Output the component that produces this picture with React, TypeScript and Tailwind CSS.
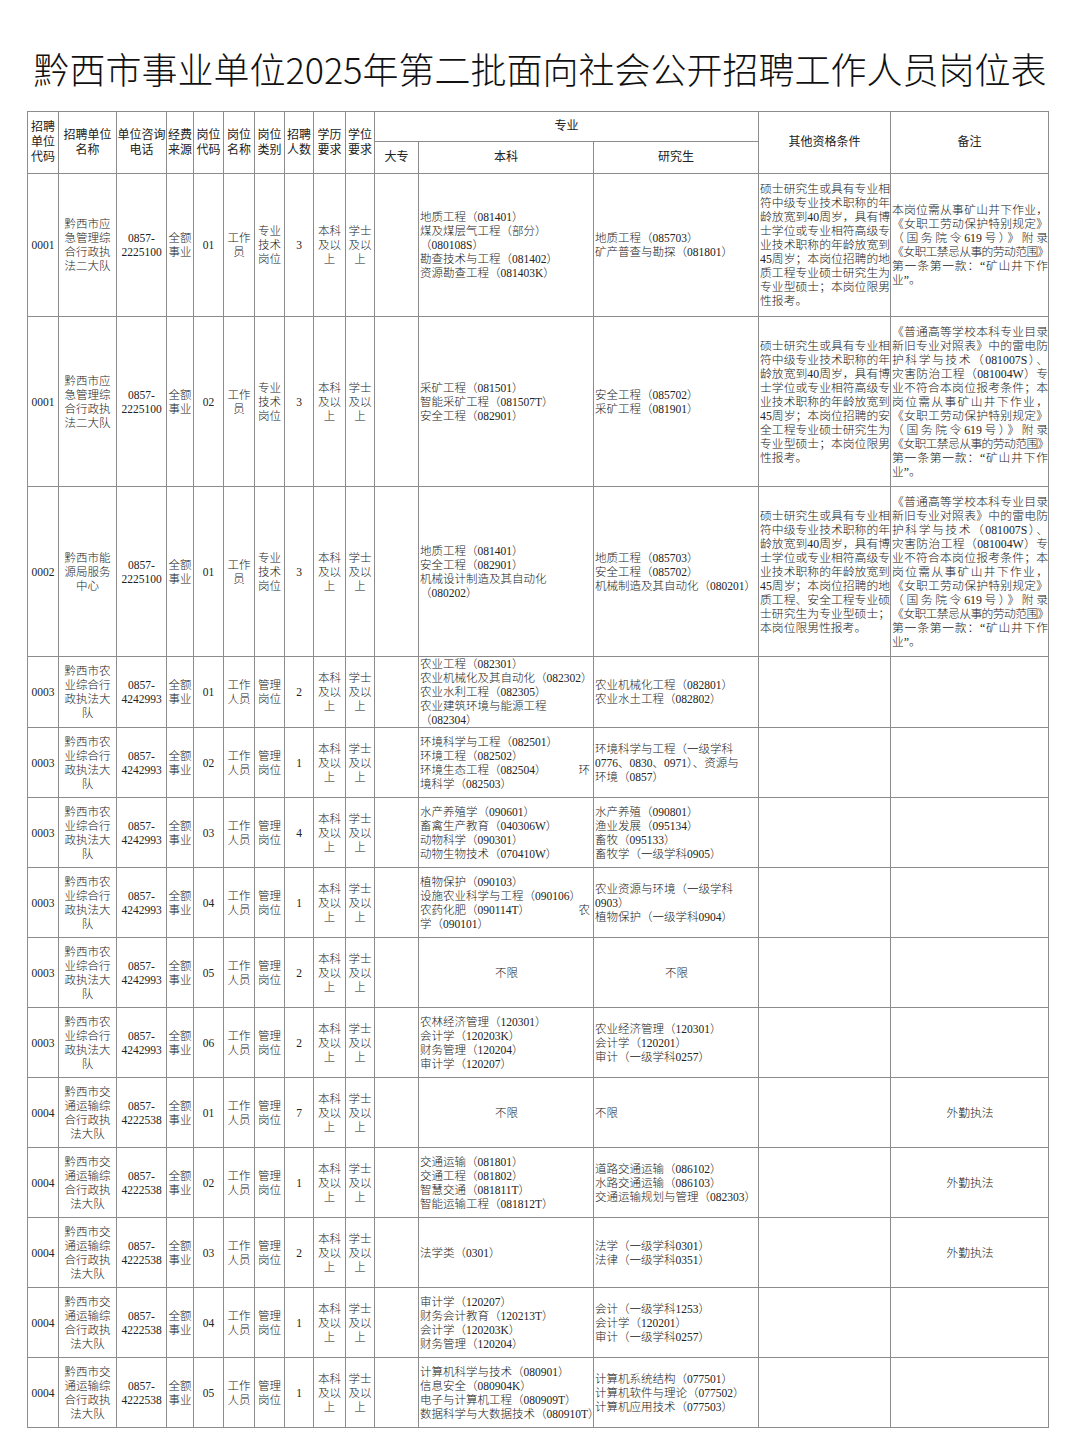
import React from 'react';

type Row = {
  code: string;
  name: string[];
  phone: string[];
  pos: string;
  title: string[];
  type: string[];
  n: string;
  bk: React.ReactNode;
  yjs: React.ReactNode;
  other?: string[];
  note?: string[];
  noteCenter?: string;
  h: string;
};

const Lines = ({ lines }: { lines: string[] }) => (
  <>
    {lines.map((l, i) => (
      <div key={i} className="whitespace-nowrap">
        {l}
      </div>
    ))}
  </>
);

const LONG = '《女职工禁忌从事的劳动范围》';

const JLines = ({ lines }: { lines: string[] }) => (
  <div>
    {lines.map((l, i) => (
      <div
        key={i}
        className={
          l === LONG
            ? 'whitespace-nowrap tracking-[-0.6px]'
            : i < lines.length - 1
            ? 'whitespace-nowrap text-justify [text-align-last:justify]'
            : 'whitespace-nowrap text-left'
        }
      >
        {l}
      </div>
    ))}
  </div>
);

const other1 = [
  '硕士研究生或具有专业相',
  '符中级专业技术职称的年',
  '龄放宽到40周岁，具有博',
  '士学位或专业相符高级专',
  '业技术职称的年龄放宽到',
  '45周岁；本岗位招聘的地',
  '质工程专业硕士研究生为',
  '专业型硕士；本岗位限男',
  '性报考。',
];
const other2 = [
  '硕士研究生或具有专业相',
  '符中级专业技术职称的年',
  '龄放宽到40周岁，具有博',
  '士学位或专业相符高级专',
  '业技术职称的年龄放宽到',
  '45周岁；本岗位招聘的安',
  '全工程专业硕士研究生为',
  '专业型硕士；本岗位限男',
  '性报考。',
];
const other3 = [
  '硕士研究生或具有专业相',
  '符中级专业技术职称的年',
  '龄放宽到40周岁，具有博',
  '士学位或专业相符高级专',
  '业技术职称的年龄放宽到',
  '45周岁；本岗位招聘的地',
  '质工程、安全工程专业硕',
  '士研究生为专业型硕士；',
  '本岗位限男性报考。',
];
const note1 = [
  '本岗位需从事矿山井下作业，',
  '《女职工劳动保护特别规定》',
  '（国务院令619号）》附录',
  LONG,
  '第一条第一款：“矿山井下作',
  '业”。',
];
const note2 = [
  '《普通高等学校本科专业目录',
  '新旧专业对照表》中的雷电防',
  '护科学与技术（081007S）、',
  '灾害防治工程（081004W）专',
  '业不符合本岗位报考条件；本',
  '岗位需从事矿山井下作业，',
  '《女职工劳动保护特别规定》',
  '（国务院令619号）》附录',
  LONG,
  '第一条第一款：“矿山井下作',
  '业”。',
];

const nameA = ['黔西市应', '急管理综', '合行政执', '法二大队'];
const nameB = ['黔西市能', '源局服务', '中心'];
const nameC = ['黔西市农', '业综合行', '政执法大', '队'];
const nameD = ['黔西市交', '通运输综', '合行政执', '法大队'];
const phoneA = ['0857-', '2225100'];
const phoneC = ['0857-', '4242993'];
const phoneD = ['0857-', '4222538'];
const tA = ['工作', '员'];
const tC = ['工作', '人员'];
const typeA = ['专业', '技术', '岗位'];
const typeC = ['管理', '岗位'];

const Split = ({ a, b }: { a: string; b: string }) => (
  <div className="flex justify-between whitespace-nowrap pr-[3px]">
    <span>{a}</span>
    <span>{b}</span>
  </div>
);

const rows: Row[] = [
  {
    code: '0001', name: nameA, phone: phoneA, pos: '01', title: tA, type: typeA, n: '3', h: 'h-[143px]',
    bk: <Lines lines={['地质工程（081401）', '煤及煤层气工程（部分）', '（080108S）', '勘查技术与工程（081402）', '资源勘查工程（081403K）']} />,
    yjs: <Lines lines={['地质工程（085703）', '矿产普查与勘探（081801）']} />,
    other: other1, note: note1,
  },
  {
    code: '0001', name: nameA, phone: phoneA, pos: '02', title: tA, type: typeA, n: '3', h: 'h-[170px]',
    bk: <Lines lines={['采矿工程（081501）', '智能采矿工程（081507T）', '安全工程（082901）']} />,
    yjs: <Lines lines={['安全工程（085702）', '采矿工程（081901）']} />,
    other: other2, note: note2,
  },
  {
    code: '0002', name: nameB, phone: phoneA, pos: '01', title: tA, type: typeA, n: '3', h: 'h-[170px]',
    bk: <Lines lines={['地质工程（081401）', '安全工程（082901）', '机械设计制造及其自动化', '（080202）']} />,
    yjs: <Lines lines={[' 地质工程（085703）', '安全工程（085702）', '机械制造及其自动化（080201）']} />,
    other: other3, note: note2,
  },
  {
    code: '0003', name: nameC, phone: phoneC, pos: '01', title: tC, type: typeC, n: '2', h: 'h-[70px]',
    bk: <Lines lines={['农业工程（082301）', '农业机械化及其自动化（082302）', '农业水利工程（082305）', '农业建筑环境与能源工程', '（082304）']} />,
    yjs: <Lines lines={['农业机械化工程（082801）', '农业水土工程（082802）']} />,
  },
  {
    code: '0003', name: nameC, phone: phoneC, pos: '02', title: tC, type: typeC, n: '1', h: 'h-[70px]',
    bk: (
      <>
        <Lines lines={['环境科学与工程（082501）', '环境工程（082502）']} />
        <Split a="环境生态工程（082504）" b="环" />
        <Lines lines={['境科学（082503）']} />
      </>
    ),
    yjs: <Lines lines={['环境科学与工程（一级学科', '0776、0830、0971）、资源与', '环境（0857）']} />,
  },
  {
    code: '0003', name: nameC, phone: phoneC, pos: '03', title: tC, type: typeC, n: '4', h: 'h-[70px]',
    bk: <Lines lines={['水产养殖学（090601）', '畜禽生产教育（040306W）', '动物科学（090301）', '动物生物技术（070410W）']} />,
    yjs: <Lines lines={['水产养殖（090801）', '渔业发展（095134）', '畜牧（095133）', '畜牧学（一级学科0905）']} />,
  },
  {
    code: '0003', name: nameC, phone: phoneC, pos: '04', title: tC, type: typeC, n: '1', h: 'h-[70px]',
    bk: (
      <>
        <Lines lines={['植物保护（090103）', '设施农业科学与工程（090106）']} />
        <Split a="农药化肥（090114T）" b="农" />
        <Lines lines={['学（090101）']} />
      </>
    ),
    yjs: <Lines lines={['农业资源与环境（一级学科', '0903）', '植物保护（一级学科0904）']} />,
  },
  {
    code: '0003', name: nameC, phone: phoneC, pos: '05', title: tC, type: typeC, n: '2', h: 'h-[70px]',
    bk: <div className="text-center">不限</div>,
    yjs: <div className="text-center">不限</div>,
  },
  {
    code: '0003', name: nameC, phone: phoneC, pos: '06', title: tC, type: typeC, n: '2', h: 'h-[70px]',
    bk: <Lines lines={['农林经济管理（120301）', '会计学（120203K）', '财务管理（120204）', '审计学（120207）']} />,
    yjs: <Lines lines={['农业经济管理（120301）', '会计学（120201）', '审计（一级学科0257）']} />,
  },
  {
    code: '0004', name: nameD, phone: phoneD, pos: '01', title: tC, type: typeC, n: '7', h: 'h-[70px]',
    bk: <div className="text-center">不限</div>,
    yjs: <Lines lines={['不限']} />,
    noteCenter: '外勤执法',
  },
  {
    code: '0004', name: nameD, phone: phoneD, pos: '02', title: tC, type: typeC, n: '1', h: 'h-[70px]',
    bk: <Lines lines={['交通运输（081801）', '交通工程（081802）', '智慧交通（081811T）', '智能运输工程（081812T）']} />,
    yjs: <Lines lines={['道路交通运输（086102）', '水路交通运输（086103）', '交通运输规划与管理（082303）']} />,
    noteCenter: '外勤执法',
  },
  {
    code: '0004', name: nameD, phone: phoneD, pos: '03', title: tC, type: typeC, n: '2', h: 'h-[70px]',
    bk: <Lines lines={['法学类（0301）']} />,
    yjs: <Lines lines={['法学（一级学科0301）', '法律（一级学科0351）']} />,
    noteCenter: '外勤执法',
  },
  {
    code: '0004', name: nameD, phone: phoneD, pos: '04', title: tC, type: typeC, n: '1', h: 'h-[70px]',
    bk: <Lines lines={['审计学（120207）', '财务会计教育（120213T）', '会计学（120203K）', '财务管理（120204）']} />,
    yjs: <Lines lines={['会计（一级学科1253）', '会计学（120201）', '审计（一级学科0257）']} />,
  },
  {
    code: '0004', name: nameD, phone: phoneD, pos: '05', title: tC, type: typeC, n: '1', h: 'h-[70px]',
    bk: <Lines lines={['计算机科学与技术（080901）', '信息安全（080904K）', '电子与计算机工程（080909T）', '数据科学与大数据技术（080910T）']} />,
    yjs: <Lines lines={['计算机系统结构（077501）', '计算机软件与理论（077502）', '计算机应用技术（077503）']} />,
  },
];

const cell = 'border border-[#8c8c8c] p-0 align-middle';
const cc = `${cell} text-center`;

export default function App() {
  return (
    <div className="w-[1080px] h-[1440px] bg-white text-[#222] font-['Liberation_Serif','Noto_Sans_CJK_SC',serif]">
      <div className="h-[111px] pt-[46px]">
        <h1 className="text-center text-[36px] leading-[44px] font-light font-['Noto_Sans_CJK_SC',sans-serif] text-[#111] whitespace-nowrap">
          黔西市事业单位2025年第二批面向社会公开招聘工作人员岗位表
        </h1>
      </div>
      <table className="ml-[27px] w-[1021px] table-fixed border-collapse text-[11.5px] leading-[14px] font-light">
        <colgroup>
          <col className="w-[31px]" />
          <col className="w-[58px]" />
          <col className="w-[50px]" />
          <col className="w-[27px]" />
          <col className="w-[30px]" />
          <col className="w-[31px]" />
          <col className="w-[30px]" />
          <col className="w-[29px]" />
          <col className="w-[32px]" />
          <col className="w-[29px]" />
          <col className="w-[44px]" />
          <col className="w-[175px]" />
          <col className="w-[165px]" />
          <col className="w-[132px]" />
          <col className="w-[158px]" />
        </colgroup>
        <thead className="text-[12px] leading-[15px] font-normal">
          <tr className="h-[30px]">
            <th rowSpan={2} className={`${cc} font-normal`}>
              <Lines lines={['招聘', '单位', '代码']} />
            </th>
            <th rowSpan={2} className={`${cc} font-normal`}>
              <Lines lines={['招聘单位', '名称']} />
            </th>
            <th rowSpan={2} className={`${cc} font-normal`}>
              <Lines lines={['单位咨询', '电话']} />
            </th>
            {[
              ['经费', '来源'],
              ['岗位', '代码'],
              ['岗位', '名称'],
              ['岗位', '类别'],
              ['招聘', '人数'],
              ['学历', '要求'],
              ['学位', '要求'],
            ].map((l, i) => (
              <th key={i} rowSpan={2} className={`${cc} font-normal`}>
                <Lines lines={l} />
              </th>
            ))}
            <th colSpan={3} className={`${cc} font-normal`}>
              专业
            </th>
            <th rowSpan={2} className={`${cc} font-normal`}>
              其他资格条件
            </th>
            <th rowSpan={2} className={`${cc} font-normal`}>
              备注
            </th>
          </tr>
          <tr className="h-[32px]">
            <th className={`${cc} font-normal`}>大专</th>
            <th className={`${cc} font-normal`}>本科</th>
            <th className={`${cc} font-normal`}>研究生</th>
          </tr>
        </thead>
        <tbody>
          {rows.map((r, i) => (
            <tr key={i} className={r.h}>
              <td className={cc}>{r.code}</td>
              <td className={cc}>
                <Lines lines={r.name} />
              </td>
              <td className={cc}>
                <Lines lines={r.phone} />
              </td>
              <td className={cc}>
                <Lines lines={['全额', '事业']} />
              </td>
              <td className={cc}>{r.pos}</td>
              <td className={cc}>
                <Lines lines={r.title} />
              </td>
              <td className={cc}>
                <Lines lines={r.type} />
              </td>
              <td className={cc}>{r.n}</td>
              <td className={cc}>
                <Lines lines={['本科', '及以', '上']} />
              </td>
              <td className={cc}>
                <Lines lines={['学士', '及以', '上']} />
              </td>
              <td className={cc}></td>
              <td className={`${cell} text-left pl-[1px]`}>{r.bk}</td>
              <td className={`${cell} text-left pl-[1px]`}>{r.yjs}</td>
              <td className={`${cell} text-[11.8px] leading-[14px] pl-[1px]`}>
                {r.other ? <JLines lines={r.other} /> : null}
              </td>
              <td className={`${cell} text-[11.8px] leading-[14px] pl-[1px]`}>
                {r.note ? <JLines lines={r.note} /> : null}
                {r.noteCenter ? <div className="text-center">{r.noteCenter}</div> : null}
              </td>
            </tr>
          ))}
        </tbody>
      </table>
    </div>
  );
}
